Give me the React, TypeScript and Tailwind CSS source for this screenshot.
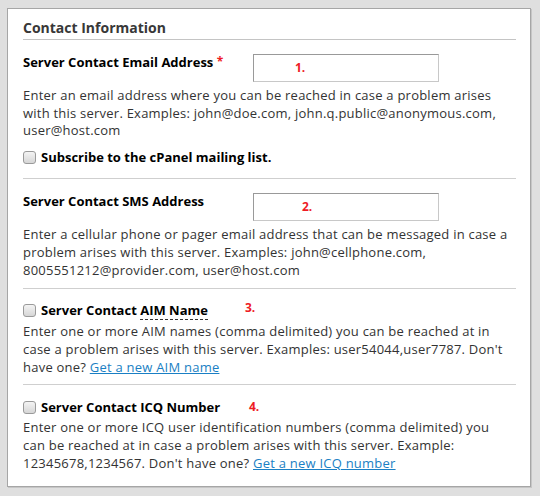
import React from 'react';

const Checkbox: React.FC = () => (
  <span className="inline-block w-[13px] h-[13px] shrink-0 rounded-[3px] border border-[#9a9a9a] bg-gradient-to-b from-[#f4f4f4] to-[#d6d6d6]" />
);

const Num: React.FC<{ n: string }> = ({ n }) => (
  <span className="text-[12px] font-bold text-[#ee1c25] leading-[18px]">{n}</span>
);

const TextBox: React.FC<{ n: string; pad: string }> = ({ n, pad }) => (
  <div
    className={`flex items-center w-[186px] h-[28px] bg-white border border-t-[#999] border-l-[#9a9a9a] border-r-[#c8c8c8] border-b-[#c8c8c8] ${pad}`}
  >
    <Num n={n} />
  </div>
);

const App: React.FC = () => {
  return (
    <div className="w-[540px] h-[496px] bg-[#dfdfdf] pt-[8px] pl-[7px] font-['Open_Sans',sans-serif] text-[13px] text-[#333]">
      <div className="w-[524px] h-[479px] bg-white border border-[#a6a6a6] shadow-[1px_1px_0_#c6c6c6] pl-[15px] pr-[14px] pt-[8px]">
        <h2 className="text-[14px] font-bold leading-[22px] text-[#383838] border-b border-[#c4c4c4]">
          Contact Information
        </h2>

        {/* email */}
        <div className="pt-[14px] pb-[12px] border-b border-[#cfcfcf]">
          <div className="flex items-start">
            <label className="w-[230px] -mt-[1px] font-bold leading-[18px] text-black">
              Server Contact Email Address <span className="text-[#ee1c25] text-[12px] align-top">*</span>
            </label>
            <TextBox n="1." pad="pl-[41px]" />
          </div>
          <p className="mt-[5px] leading-[17.7px] tracking-[0.23px]">
            Enter an email address where you can be reached in case a problem arises with this server. Examples: john@doe.com, john.q.public@anonymous.com, user@host.com
          </p>
          <div className="mt-[8px] flex items-center gap-[5px] leading-[18px]">
            <Checkbox />
            <span className="font-bold text-black">Subscribe to the cPanel mailing list.</span>
          </div>
        </div>

        {/* sms */}
        <div className="pt-[14px] pb-[9px] border-b border-[#cfcfcf]">
          <div className="flex items-start">
            <label className="w-[230px] -mt-[1px] font-bold leading-[18px] text-black">
              Server Contact SMS Address
            </label>
            <TextBox n="2." pad="pl-[48px]" />
          </div>
          <p className="mt-[5px] leading-[17.7px] tracking-[0.23px]">
            Enter a cellular phone or pager email address that can be messaged in case a problem arises with this server. Examples: john@cellphone.com, 8005551212@provider.com, user@host.com
          </p>
        </div>

        {/* aim */}
        <div className="pt-[12px] pb-[8px] border-b border-[#cfcfcf]">
          <div className="relative flex items-center gap-[5px] leading-[18px]">
            <Checkbox />
            <span className="font-bold text-black">
              Server Contact{' '}
              <span className="border-b border-dashed border-[#333]">AIM Name</span>
            </span>
            <span className="absolute left-[222px] top-[-3px]">
              <Num n="3." />
            </span>
          </div>
          <p className="mt-[4px] leading-[17.7px] tracking-[0.23px]">
            Enter one or more AIM names (comma delimited) you can be reached at in case a problem arises with this server. Examples: user54044,user7787. Don't have one?{' '}
            <a href="#" className="text-[#1a7fc4] underline">Get a new AIM name</a>
          </p>
        </div>

        {/* icq */}
        <div className="pt-[13px]">
          <div className="relative flex items-center gap-[5px] leading-[18px]">
            <Checkbox />
            <span className="font-bold text-black">Server Contact ICQ Number</span>
            <span className="absolute left-[226px] top-[-1px]">
              <Num n="4." />
            </span>
          </div>
          <p className="mt-[3px] leading-[17.7px] tracking-[0.23px]">
            Enter one or more ICQ user identification numbers (comma delimited) you
            <br />
            can be reached at in case a problem arises with this server. Example: 12345678,1234567. Don't have one?{' '}
            <a href="#" className="text-[#1a7fc4] underline">Get a new ICQ number</a>
          </p>
        </div>
      </div>
    </div>
  );
};

export default App;
